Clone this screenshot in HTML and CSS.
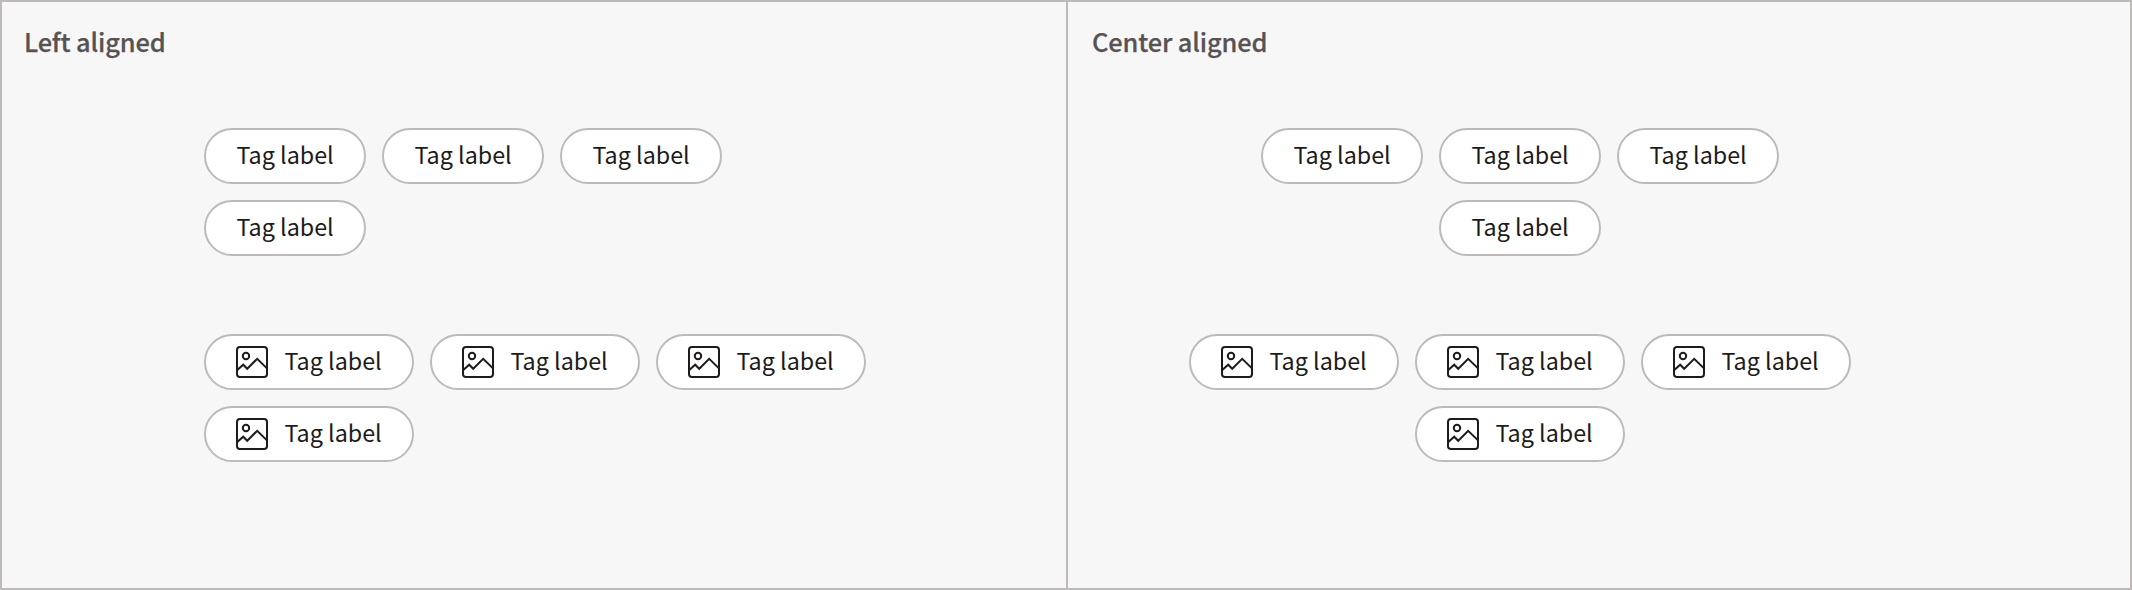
FILE: index.html
```
<!DOCTYPE html>
<html lang="en">
<head>
<meta charset="utf-8">
<title>Tag alignment</title>
<link rel="stylesheet" href="styles.css">
</head>
<body>
<svg width="0" height="0" class="sprite" aria-hidden="true">
  <symbol id="image" viewBox="0 0 32 32">
    <rect x="1" y="1" width="30" height="30" rx="3"/>
    <circle cx="10" cy="10" r="3.2"/>
    <path d="M1 24.3L7.2 18.7L11.2 22.8L21.2 12.8L31 22.4"/>
  </symbol>
</svg>
<main class="board">
  <section class="panel">
    <h2 class="title">Left aligned</h2>
    <div class="groups">
      <div class="tags">
        <span class="tag"><span class="label">Tag label</span></span>
        <span class="tag"><span class="label">Tag label</span></span>
        <span class="tag"><span class="label">Tag label</span></span>
        <span class="tag"><span class="label">Tag label</span></span>
      </div>
      <div class="tags">
        <span class="tag"><svg class="icon"><use href="#image"/></svg><span class="label">Tag label</span></span>
        <span class="tag"><svg class="icon"><use href="#image"/></svg><span class="label">Tag label</span></span>
        <span class="tag"><svg class="icon"><use href="#image"/></svg><span class="label">Tag label</span></span>
        <span class="tag"><svg class="icon"><use href="#image"/></svg><span class="label">Tag label</span></span>
      </div>
    </div>
  </section>
  <section class="panel panel-center">
    <h2 class="title">Center aligned</h2>
    <div class="groups">
      <div class="tags">
        <span class="tag"><span class="label">Tag label</span></span>
        <span class="tag"><span class="label">Tag label</span></span>
        <span class="tag"><span class="label">Tag label</span></span>
        <span class="tag"><span class="label">Tag label</span></span>
      </div>
      <div class="tags">
        <span class="tag"><svg class="icon"><use href="#image"/></svg><span class="label">Tag label</span></span>
        <span class="tag"><svg class="icon"><use href="#image"/></svg><span class="label">Tag label</span></span>
        <span class="tag"><svg class="icon"><use href="#image"/></svg><span class="label">Tag label</span></span>
        <span class="tag"><svg class="icon"><use href="#image"/></svg><span class="label">Tag label</span></span>
      </div>
    </div>
  </section>
</main>
</body>
</html>
```
FILE: styles.css
```
* { box-sizing: border-box; }

body {
  margin: 0;
  font-family: "Noto Sans CJK SC", "Noto Sans", sans-serif;
  color: #1d1b1b;
}

.sprite { display: block; }

.board {
  display: grid;
  grid-template-columns: 1066px 1fr;
  height: 590px;
  border: 2px solid #bfbaba;
  background: #f7f7f7;
}

.panel { padding: 21px 22px; }

.panel:first-child { border-right: 2px solid #bfbaba; }

.panel-center { padding-left: 24px; }

.title {
  margin: 0;
  height: 36px;
  font-size: 25.4px;
  line-height: 36px;
  font-weight: 500;
  letter-spacing: -0.12px;
  -webkit-text-stroke: 0.25px #575352;
  color: #575352;
}

.groups {
  display: flex;
  flex-direction: column;
  gap: 78px;
  width: 662px;
  margin: 69px 0 0 180px;
}

.panel-center .groups { margin-left: 97px; }

.tags {
  display: flex;
  flex-wrap: wrap;
  gap: 16px;
}

.groups .tags:first-child { width: 518px; }

.panel-center .tags {
  justify-content: center;
  align-self: center;
}

.tag {
  display: flex;
  align-items: center;
  gap: 16px;
  height: 56px;
  padding: 0 30px;
  border: 2px solid #bfbaba;
  border-radius: 28px;
  background: #fff;
}

.label {
  width: 98px;
  padding: 0 0 4px 0.5px;
  font-size: 23.3px;
  line-height: 32px;
  white-space: nowrap;
}

.icon {
  width: 32px;
  height: 32px;
  fill: none;
  stroke: #1d1b1b;
  stroke-width: 2;
}
```
